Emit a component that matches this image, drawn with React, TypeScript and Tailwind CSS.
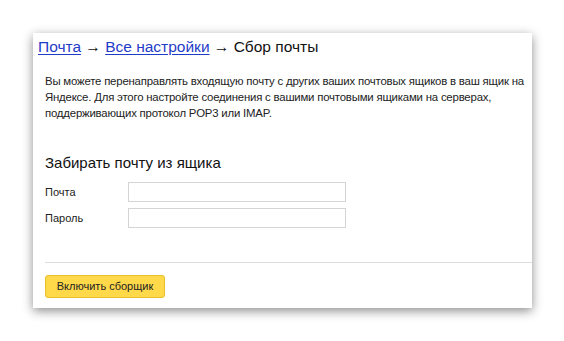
import React from 'react';

const font = { fontFamily: '"Liberation Sans", Arial, sans-serif' };

export default function App() {
  return (
    <div className="w-[564px] h-[341px] bg-white pl-[33px] pt-[33px]" style={font}>
      <div className="w-[499px] h-[275px] bg-white shadow-[0_3px_10px_rgba(0,0,0,0.45)] flex flex-col pt-[5px]">
        {/* Breadcrumbs */}
        <div className="pl-[5px] text-[15.5px] leading-[17px] text-[#111]">
          <a className="text-[#1f3cc8] underline underline-offset-2">Почта</a>
          <span> → </span>
          <a className="text-[#1f3cc8] underline underline-offset-2">Все настройки</a>
          <span> → Сбор почты</span>
        </div>

        <p className="pl-[12px] mt-[18px] whitespace-nowrap text-[11.4px] tracking-[-0.2px] leading-[16px] text-[#222]">
          Вы можете перенаправлять входящую почту с других ваших почтовых ящиков в ваш ящик на
          <br />
          Яндексе. Для этого настройте соединения с вашими почтовыми ящиками на серверах,
          <br />
          поддерживающих протокол POP3 или IMAP.
        </p>

        <h2 className="pl-[12px] mt-[32px] text-[15px] leading-[20px] text-[#111]">Забирать почту из ящика</h2>

        <div className="pl-[12px] mt-[9px] flex flex-col gap-[6px]">
          <div className="flex items-center">
            <label className="w-[83px] text-[11px] text-[#222]">Почта</label>
            <input className="w-[218px] h-[20px] border border-[#d4d4d4] bg-white outline-none" />
          </div>
          <div className="flex items-center">
            <label className="w-[83px] text-[11px] text-[#222]">Пароль</label>
            <input type="password" className="w-[218px] h-[20px] border border-[#d4d4d4] bg-white outline-none" />
          </div>
        </div>

        <div className="ml-[12px] mt-[34px] border-t border-[#dcdcdc]" />

        <div className="pl-[12px] mt-[10px]">
          <button className="w-[120px] h-[23px] rounded-[3px] bg-[#ffd94a] border border-[#e8bf2c] text-[11px] text-[#222]">
            Включить сборщик
          </button>
        </div>
      </div>
    </div>
  );
}
